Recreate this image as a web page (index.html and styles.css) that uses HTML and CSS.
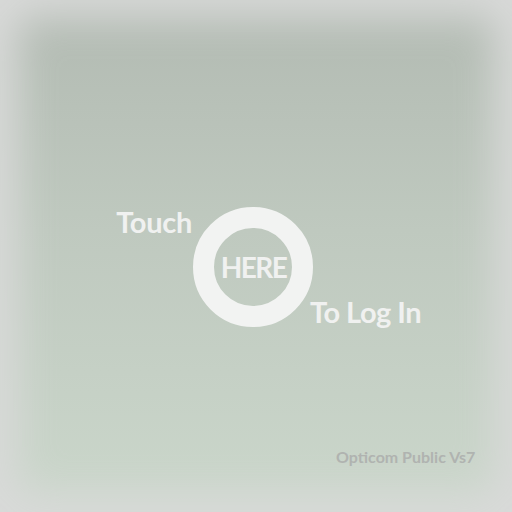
FILE: index.html
```html
<!DOCTYPE html>
<html>
<head>
<meta charset="utf-8">
<link rel="stylesheet" href="styles.css">
</head>
<body>
<div class="screen">
  <div class="login">
    <div class="touch">Touch</div>
    <div class="ring"><span class="here">HERE</span></div>
    <div class="tologin">To Log In</div>
  </div>
  <div class="footer">Opticom Public Vs7</div>
</div>
</body>
</html>
```
FILE: styles.css
```css
html, body { margin: 0; padding: 0; }
body { width: 512px; height: 512px; overflow: hidden; background: #d8d9d8; }
.screen {
  width: 512px; height: 512px; box-sizing: border-box;
  background: linear-gradient(180deg, #b2bab2 0%, #bfc9bf 45%, #cbd7cb 100%);
  box-shadow: inset 0 0 40px 18px #d9dad9;
  display: flex; flex-direction: column;
  font-family: Lato, "Open Sans", sans-serif;
}
.login {
  margin-top: 207px; margin-left: 193px;
  display: grid; grid-template-columns: 0 120px 0;
  height: 120px;
}
.touch {
  justify-self: end; align-self: start;
  color: #f0f1f0; font-weight: 700; font-size: 29px; line-height: 1;
  margin-top: 0; margin-right: 1px; letter-spacing: -0.3px; white-space: nowrap;
}
.ring {
  width: 120px; height: 120px; box-sizing: border-box;
  border: 21px solid #f2f3f2; border-radius: 50%;
  display: flex; align-items: center; justify-content: center;
}
.here { color: #f0f1f0; font-weight: 700; font-size: 28px; line-height: 1; letter-spacing: -1.6px; margin-right: -1px; }
.tologin {
  justify-self: start; align-self: end;
  color: #f0f1f0; font-weight: 700; font-size: 29px; line-height: 1;
  margin-bottom: 1px; margin-left: -3px; letter-spacing: -0.5px; white-space: nowrap;
}
.footer {
  margin-top: 120px; margin-left: 336px;
  color: #b0b3b0; font-weight: 700; font-size: 16px; white-space: nowrap;
}
```
